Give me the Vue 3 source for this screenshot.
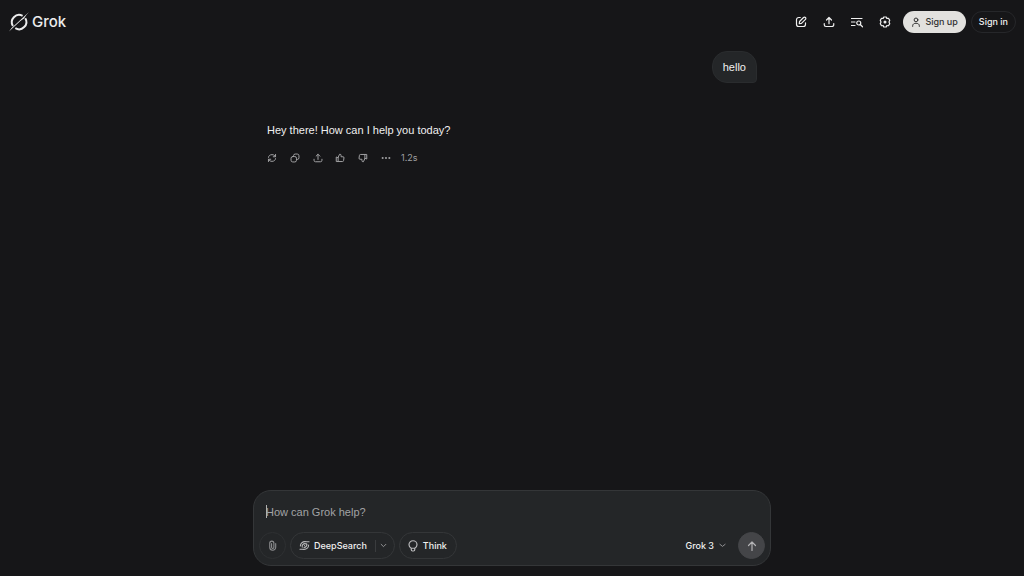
<script setup>
import { ref } from 'vue'

const draft = ref('')
</script>

<template>
  <div class="app">
    <header class="topbar">
      <a class="brand" href="#" aria-label="Grok">
        <svg class="mark" viewBox="0 0 22 22" fill="none" stroke="currentColor" aria-hidden="true">
          <path d="M14.600 4.800A7.300 7.300 0 0 0 4.900 15" stroke-width="2" />
          <path d="M7.300 17.200A7.300 7.300 0 0 0 17.300 7.200" stroke-width="2" />
          <path d="M1 20.500Q3.500 16.500 8.500 12.500L21 1Q17.500 4.500 16 7.500Q12.500 9.500 8.600 13.500Z" fill="currentColor" stroke="none" />
        </svg>
        <span>Grok</span>
      </a>
      <nav class="tools">
        <button class="tool" type="button" aria-label="New chat">
          <svg viewBox="0 0 24 24"><path d="M10.500 3H7.500A4.500 4.500 0 0 0 3 7.500v9A4.500 4.500 0 0 0 7.500 21h9a4.500 4.500 0 0 0 4.500-4.500v-3M8.500 15.500l.6-4.500 8-8a2.600 2.600 0 0 1 3.800 3.800l-8 8z" /></svg>
        </button>
        <button class="tool" type="button" aria-label="Share">
          <svg viewBox="0 0 24 24"><path d="M12 15.500V3M7 8l5-5 5 5M2.500 15v2.500a3.500 3.500 0 0 0 3.500 3.500h12a3.500 3.500 0 0 0 3.500-3.500V15" /></svg>
        </button>
        <button class="tool" type="button" aria-label="Search history">
          <svg viewBox="0 0 24 24"><path d="M1 5h21M1 12h7M1 19h7" /><circle cx="15.500" cy="14" r="4" /><path d="M18.500 17l4.500 4.500" /></svg>
        </button>
        <button class="tool" type="button" aria-label="Settings">
          <svg viewBox="0 0 24 24"><path d="M9.500 2h5l1.200 2.800 3.300-.3 2.500 4.200L20 12l1.500 3.300-2.500 4.200-3.300-.3L14.500 22h-5l-1.200-2.800-3.300.3-2.500-4.200L4 12 2.500 8.700 5 4.500l3.300.3z" /><circle cx="12" cy="12" r="1.800" fill="currentColor" /></svg>
        </button>
        <button class="signup" type="button">
          <svg viewBox="0 0 24 24" aria-hidden="true"><circle cx="12" cy="7" r="4.500" /><path d="M4 22.500V21c0-3.800 3.500-6 8-6s8 2.200 8 6v1.500" /></svg>
          Sign up
        </button>
        <button class="signin" type="button">Sign in</button>
      </nav>
    </header>

    <main class="thread">
      <p class="bubble">hello</p>
      <p class="answer">Hey there! How can I help you today?</p>
      <div class="actions">
        <div class="icons">
          <button type="button" aria-label="Regenerate">
            <svg viewBox="0 0 24 24"><path d="M3.500 10.500C4 6 7.500 4 12 4c4 0 6.500 1.500 8.500 5M20.500 3.500V9H15M20.500 13.500C20 18 16.500 20 12 20c-4 0-6.500-1.500-8.500-5M3.500 20.500V15H9" /></svg>
          </button>
          <button type="button" aria-label="Copy">
            <svg viewBox="0 0 24 24"><rect x="2.500" y="8.500" width="13" height="13" rx="4" /><path d="M8.500 8.500V6.500a4 4 0 0 1 4-4h5a4 4 0 0 1 4 4v5a4 4 0 0 1-4 4h-2" /></svg>
          </button>
          <button type="button" aria-label="Share response">
            <svg viewBox="0 0 24 24"><path d="M12 15.500V3M7.500 7.500L12 3l4.500 4.500M2.500 15v2.500a3.500 3.500 0 0 0 3.500 3.500h12a3.500 3.500 0 0 0 3.500-3.500V15" /></svg>
          </button>
          <button type="button" aria-label="Like">
            <svg viewBox="0 0 24 24"><path d="M7.500 10.500L11 3h1a2.500 2.500 0 0 1 2.500 2.500V9h4.500a2.500 2.500 0 0 1 2.500 2.900l-1 6.500a2.500 2.500 0 0 1-2.500 2.100H3V10.500zM7.500 10.500v10" /></svg>
          </button>
          <button type="button" aria-label="Dislike">
            <svg viewBox="0 0 24 24"><path d="M16.500 13.500L13 21h-1a2.500 2.500 0 0 1-2.500-2.500V15H5a2.500 2.500 0 0 1-2.500-2.900l1-6.500A2.500 2.500 0 0 1 6 3.500h15v10zM16.500 13.500v-10" /></svg>
          </button>
          <button type="button" aria-label="More">
            <svg viewBox="0 0 24 24"><g fill="currentColor" stroke="none"><circle cx="4" cy="12" r="2.500" /><circle cx="12" cy="12" r="2.500" /><circle cx="20" cy="12" r="2.500" /></g></svg>
          </button>
        </div>
        <span class="time">1.2s</span>
      </div>
    </main>

    <form class="composer" @submit.prevent>
      <div class="field">
        <span v-if="!draft" class="caret"></span>
        <input v-model="draft" type="text" aria-label="Message" placeholder="How can Grok help?" />
      </div>
      <div class="controls">
        <button class="round attach" type="button" aria-label="Attach">
          <svg viewBox="0 0 24 24"><path d="M10 8v8a2.500 2.500 0 0 0 5 0V7a4.500 4.500 0 0 0-9 0v9a6.500 6.500 0 0 0 13 0V8" /></svg>
        </button>
        <div class="pill split">
          <button class="deep" type="button">
            <svg viewBox="0 0 24 24" aria-hidden="true"><path d="M3 13C3 7.500 7.500 3.500 13 3.500c3.500 0 6.500.8 9 .3M21 11c0 5.500-4.500 9.500-10 9.500-3.500 0-6.500-.8-9-.3M7 15.500C6 11.500 9 8 13 8c2.500 0 4 1 4.500 2.500M17 8.500c1 4-2 7.500-6 7.500M12 12h.1" /></svg>
            DeepSearch
          </button>
          <button class="more" type="button" aria-label="DeepSearch options">
            <svg viewBox="0 0 24 24"><path d="M4 8l8 8 8-8" /></svg>
          </button>
        </div>
        <button class="pill think" type="button">
          <svg viewBox="0 0 24 24" aria-hidden="true"><path d="M8.500 16.500C6 15 4 12.500 4 9.500a8 8 0 0 1 16 0c0 3-2 5.500-4.500 7zM8.500 16.500V19c0 1.800 1 3 2.500 3h2c1.500 0 2.500-1.200 2.500-3v-2.500" /></svg>
          Think
        </button>
        <button class="model" type="button">
          Grok 3
          <svg viewBox="0 0 24 24" aria-hidden="true"><path d="M3 8l9 7 9-7" /></svg>
        </button>
        <button class="round send" type="submit" aria-label="Send">
          <svg viewBox="0 0 24 24"><path d="M12 21V4M5 11l7-7 7 7" /></svg>
        </button>
      </div>
    </form>
  </div>
</template>

<style>
body {
  background: #161618;
}
</style>

<style scoped>
.app {
  box-sizing: border-box;
  min-height: 100vh;
  display: flex;
  flex-direction: column;
  padding-bottom: 10px;
  background: #161618;
  color: #f0f0f0;
  font-family: Inter, "Liberation Sans", sans-serif;
}
button {
  display: flex;
  align-items: center;
  justify-content: center;
  box-sizing: border-box;
  margin: 0;
  padding: 0;
  border: 0;
  background: none;
  color: inherit;
  font: 500 9px/12px Inter, "Liberation Sans", sans-serif;
  cursor: pointer;
}
button svg {
  width: 12px;
  height: 12px;
  flex: none;
  fill: none;
  stroke: currentColor;
  stroke-width: 2.4;
  stroke-linejoin: round;
  stroke-linecap: round;
}
p {
  margin: 0;
}
.topbar {
  display: flex;
  align-items: center;
  justify-content: space-between;
  height: 43px;
  padding: 0 8px;
}
.brand {
  display: flex;
  align-items: center;
  gap: 2px;
  color: #ececec;
  font-size: 15px;
  line-height: 20px;
  font-weight: 500;
  text-decoration: none;
}
.mark {
  width: 22px;
  height: 22px;
}
.tools {
  display: flex;
  align-items: center;
}
.tool {
  width: 28px;
  height: 28px;
}
.signup,
.signin {
  height: 22px;
  border-radius: 11px;
}
.signup {
  gap: 4px;
  margin-left: 4px;
  padding: 0 8px;
  background: #e2e1de;
  color: #303030;
}
.signup svg {
  width: 10px;
  height: 10px;
}
.signin {
  margin-left: 5px;
  padding: 0 7px;
  border: 1px solid #26272a;
}
.thread {
  flex: 1;
  display: flex;
  flex-direction: column;
  box-sizing: border-box;
  width: 100%;
  max-width: 490px;
  margin: 0 auto;
  padding-top: 8px;
  font-family: "Liberation Sans", sans-serif;
  font-size: 11px;
  line-height: 18px;
}
.bubble {
  align-self: flex-end;
  padding: 6px 10px;
  border: 1px solid #2a2c2e;
  border-radius: 15px 15px 4px 15px;
  background: #242628;
}
.answer {
  margin-top: 38px;
}
.actions {
  display: flex;
  align-items: center;
  margin: 8px 0 0 -6px;
  color: #a0a0a2;
}
.icons {
  display: flex;
  width: 136px;
}
.icons button {
  flex: 1;
  height: 22px;
}
.icons svg {
  width: 10px;
  height: 10px;
}
.time {
  margin-left: 4px;
  font: 400 9px/12px Inter, "Liberation Sans", sans-serif;
}
.composer {
  box-sizing: border-box;
  width: calc(100% - 32px);
  max-width: 518px;
  margin: 0 auto;
  padding: 12px 5px 6px;
  border: 1px solid #343638;
  border-radius: 18px;
  background: #242628;
}
.field {
  position: relative;
  padding: 0 7px;
}
.caret {
  position: absolute;
  left: 7px;
  top: 2px;
  width: 1px;
  height: 13px;
  background: #b0b0b0;
}
.field input {
  display: block;
  box-sizing: border-box;
  width: 100%;
  height: 18px;
  padding: 0;
  border: 0;
  outline: 0;
  background: none;
  color: #f0f0f0;
  font: 400 11px/18px "Liberation Sans", sans-serif;
}
.field input::placeholder {
  color: #a2a3a5;
  opacity: 1;
}
.controls {
  display: flex;
  align-items: center;
  gap: 4px;
  margin-top: 11px;
}
.round {
  width: 27px;
  height: 27px;
  border: 1px solid #2e3032;
  border-radius: 50%;
}
.attach {
  color: #8c8d8f;
}
.attach svg {
  width: 11px;
  height: 11px;
}
.pill {
  box-sizing: border-box;
  height: 27px;
  border: 1px solid #343638;
  border-radius: 14px;
}
.split {
  display: flex;
  align-items: center;
}
.deep {
  gap: 4px;
  padding: 0 8px;
}
.deep svg,
.think svg {
  color: #b8b8ba;
}
.deep svg {
  width: 11px;
  height: 11px;
}
.more {
  width: 19px;
  height: 12px;
  padding-right: 3px;
  border-left: 1px solid #3a3c3e;
}
.more svg,
.model svg {
  width: 7px;
  height: 7px;
  stroke-width: 3;
  color: #a0a0a2;
}
.think {
  gap: 4px;
  padding: 0 9px 0 7px;
}
.model {
  gap: 5px;
  height: 27px;
  margin-left: auto;
  padding: 0 8px;
}
.send {
  border-color: #444548;
  background: #444548;
  color: #b4b4b6;
}
</style>
